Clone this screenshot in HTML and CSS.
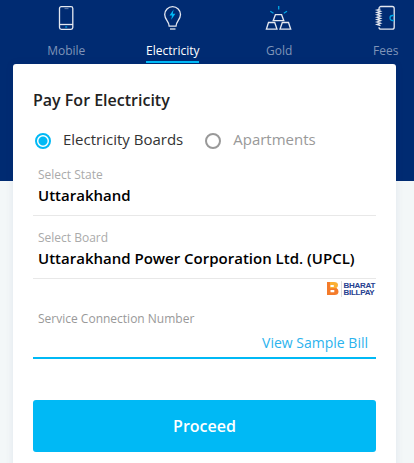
FILE: index.html
```html
<!DOCTYPE html>
<html lang="en">
<head>
    <meta charset="UTF-8">
    <meta name="viewport" content="width=device-width, initial-scale=1.0">
    <title>Pay For Electricity</title>
    <link rel="stylesheet" href="styles.css">
</head>
<body>
    <nav class="tabs">
        <a class="tab">
            <svg class="tab-icon" width="28" height="26" viewBox="0 0 28 26">
                <rect x="7.500" y="1.700" width="13.300" height="22.600" rx="1.800"/>
                <path d="M7.500 19.500h13.500"/>
                <path class="dim" d="M12.500 3.500h4"/>
                <path class="accent" d="M13.200 22h2"/>
            </svg>
            <span>Mobile</span>
        </a>
        <a class="tab active">
            <svg class="tab-icon" width="28" height="26" viewBox="0 0 28 26">
                <path d="M10.2 21.2c0-4.6-4.5-6.5-4.5-11.6a7.9 7.9 0 0 1 15.8 0c0 5.1-4.5 7-4.5 11.6z"/>
                <path d="M11 24h5.5"/>
                <path class="bolt" d="M14.6 4.5l-4.1 5.9h2.5l-.8 4.4 4.2-6.1h-2.6z"/>
            </svg>
            <span>Electricity</span>
        </a>
        <a class="tab">
            <svg class="tab-icon" width="28" height="26" viewBox="0 0 28 26">
                <path d="M10.4 9.7h6.2l2.2 6H8.2z"/>
                <path d="M3.5 17.5h6.2l2.3 6.7H1.4z"/>
                <path d="M17.3 17.5h6.2l2.2 6.7H15z"/>
                <path class="accent" d="M13.7 1v3.4M5.3 6.2l3.2 2M22 6.2l-3.2 2"/>
            </svg>
            <span>Gold</span>
        </a>
        <a class="tab">
            <svg class="tab-icon" width="28" height="26" viewBox="0 0 28 26">
                <path d="M7 4V3.500a2 2 0 0 1 2-2h11.200a2 2 0 0 1 2 2v18.700a2 2 0 0 1-2 2H9a2 2 0 0 1-2-2"/>
                <path d="M8.500 4l-3.500 1 3.500 1.200-3.500 1.200 3.500 1.200-3.500 1.200 3.500 1.200-3.500 1.200 3.500 1.200-3.500 1.200 3.500 1.200-3.500 1.200 3.500 1.200-3.500 1.200 3.500 1.200"/>
                <path class="accent" d="M22 10.500h-1.500a2.500 2.500 0 0 0 0 5H22"/>
            </svg>
            <span>Fees</span>
        </a>
    </nav>

    <main class="card">
        <h1>Pay For Electricity</h1>

        <div class="options">
            <label class="option selected"><i class="radio"></i>Electricity Boards</label>
            <label class="option"><i class="radio"></i>Apartments</label>
        </div>

        <div class="field">
            <div class="field-label">Select State</div>
            <div class="field-value">Uttarakhand</div>
        </div>
        <div class="field">
            <div class="field-label">Select Board</div>
            <div class="field-value">Uttarakhand Power Corporation Ltd. (UPCL)</div>
        </div>

        <div class="billpay">
            <svg width="12" height="15" viewBox="0 0 12 15">
                <path fill="#f47b2a" d="M0 1h3v13H0zM3 7h6.500q2 1 2 3.500 0 3.500-4 3.500H3z"/>
                <path fill="#fbb034" d="M3 1h4q4 0 4 3 0 2.500-2 3.200H3z"/>
                <path fill="#fff" d="M3.500 4h3.300v2H3.500zM3.500 9h3.800v2.300H3.500z"/>
            </svg>
            <div class="billpay-name"><div>BHARAT</div><div>BILLPAY</div></div>
        </div>

        <div class="field number">
            <div class="field-label">Service Connection Number</div>
            <a class="sample">View Sample Bill</a>
        </div>

        <button class="proceed">Proceed</button>
    </main>
</body>
</html>
```

FILE: styles.css
```css
* {
    box-sizing: border-box;
}

body {
    margin: 0;
    height: 463px;
    overflow: hidden;
    font-family: 'Open Sans', sans-serif;
    background: linear-gradient(#002b72 181px, #f3f7f8 181px);
}

.tabs {
    display: grid;
    grid-template-columns: repeat(4, 106.5px);
    justify-items: center;
    height: 64px;
    margin-left: 13px;
}

.tab {
    display: flex;
    flex-direction: column;
    align-items: center;
    height: 63px;
    padding-top: 5px;
    font-size: 12px;
    line-height: 18px;
    color: #7f94b8;
}

.tab span {
    margin-top: 11px;
}

.tab.active {
    color: #fff;
    border-bottom: 2px solid #00b9f5;
}

.tab-icon {
    fill: none;
    stroke: #e4e8f0;
    stroke-width: 1.3;
}

.tab-icon .accent {
    stroke: #00a5e5;
}

.tab-icon .dim {
    stroke: #53709f;
}

.tab-icon .bolt {
    fill: #00b9f5;
    stroke: none;
}

.card {
    width: 383px;
    height: 410px;
    margin-left: 13px;
    padding: 25px 20px 0;
    background: #fff;
    border-radius: 3px 3px 0 0;
    box-shadow: 0 0 8px rgba(0, 41, 112, 0.08);
}

h1 {
    margin: 0;
    font-size: 16px;
    font-weight: 600;
    line-height: 22px;
    color: #222;
}

.options {
    display: flex;
    gap: 22px;
    margin-top: 17px;
    padding-left: 2px;
}

.option {
    display: flex;
    align-items: center;
    gap: 12px;
    font-size: 15px;
    line-height: 22px;
    color: #999;
}

.option.selected {
    color: #333;
}

.radio {
    width: 16px;
    height: 16px;
    margin-top: 3px;
    border: 2px solid #999;
    border-radius: 50%;
}

.selected .radio {
    border-color: #00b9f5;
    background: radial-gradient(circle, #00b9f5 4px, #fff 5px);
}

.field {
    height: 63px;
    padding: 13px 5px 0;
    border-bottom: 1px solid #e8e8e8;
}

.options + .field {
    height: 66px;
    padding-top: 16px;
}

.field-label {
    font-size: 12px;
    line-height: 18px;
    color: #aaa;
}

.field-value {
    font-size: 15px;
    font-weight: 600;
    line-height: 22px;
    white-space: nowrap;
    color: #000;
}

.billpay {
    display: flex;
    justify-content: flex-end;
    gap: 2px;
    height: 16px;
    margin-top: 2px;
    padding-right: 1px;
}

.billpay-name {
    height: 16px;
    padding: 1px 0 0 2px;
    border-left: 1px solid #ddd;
    font-family: 'Liberation Sans', Arial, sans-serif;
    font-size: 8px;
    font-weight: bold;
    line-height: 7px;
    letter-spacing: -0.3px;
    color: #25408f;
}

.field.number {
    display: flex;
    flex-direction: column;
    height: 62px;
    padding-top: 13px;
    border-bottom: 2px solid #00b9f5;
}

.number .field-label {
    color: #999;
}

.sample {
    align-self: flex-end;
    margin: 4px 3px 0 0;
    font-size: 14px;
    line-height: 22px;
    color: #2bb3ee;
}

.proceed {
    display: block;
    width: 100%;
    height: 52px;
    margin-top: 41px;
    border: none;
    border-radius: 3px;
    background: #00b9f5;
    font-family: inherit;
    font-size: 16px;
    font-weight: 600;
    color: #fff;
}
```
